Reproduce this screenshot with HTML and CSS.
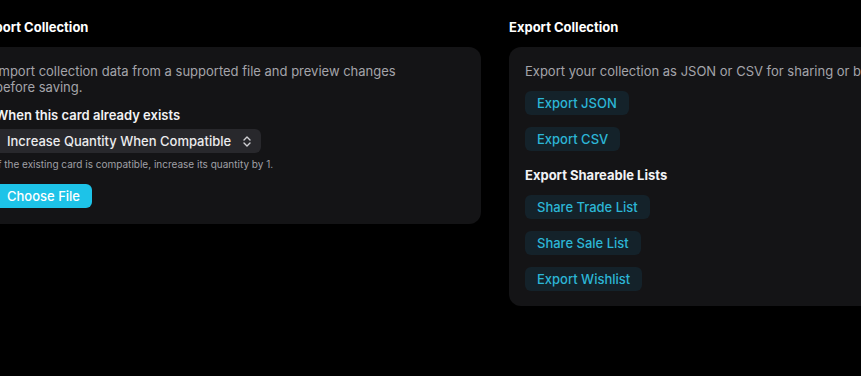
FILE: index.html
```html
<!DOCTYPE html>
<html>
<head>
<meta charset="utf-8">
<link rel="stylesheet" href="styles.css">
</head>
<body>
<div class="page">
  <section class="col">
    <h2 class="heading">Import Collection</h2>
    <div class="card">
      <p class="desc">Import collection data from a supported file and preview changes before saving.</p>
      <div class="label">When this card already exists</div>
      <div class="select">
        <span>Increase Quantity When Compatible</span>
        <svg class="chev" width="8" height="11" viewBox="0 0 8 11"><path d="M1 4 L4 1 L7 4 M1 7 L4 10 L7 7" fill="none" stroke="#d0d0d4" stroke-width="1.4" stroke-linecap="round" stroke-linejoin="round"/></svg>
      </div>
      <div class="help">If the existing card is compatible, increase its quantity by 1.</div>
      <div class="row"><button class="primary">Choose File</button></div>
    </div>
  </section>
  <section class="col">
    <h2 class="heading">Export Collection</h2>
    <div class="card">
      <p class="desc one">Export your collection as JSON or CSV for sharing or backup.</p>
      <div class="row"><button class="ghost">Export JSON</button></div>
      <div class="row"><button class="ghost">Export CSV</button></div>
      <div class="label sub">Export Shareable Lists</div>
      <div class="row"><button class="ghost">Share Trade List</button></div>
      <div class="row"><button class="ghost">Share Sale List</button></div>
      <div class="row"><button class="ghost">Export Wishlist</button></div>
    </div>
  </section>
</div>
</body>
</html>
```

FILE: styles.css
```css
html, body {
  margin: 0;
  padding: 0;
  background: #000;
  overflow: hidden;
}
body {
  font-family: Inter, "Noto Sans", sans-serif;
  color: #ececee;
  -webkit-font-smoothing: antialiased;
}
.page {
  display: grid;
  grid-template-columns: 502px 502px;
  column-gap: 28px;
  margin-left: -21px;
  padding-top: 19px;
  align-items: start;
}
.col {
  display: flex;
  flex-direction: column;
}
.heading {
  margin: 0 0 12px 0;
  font-size: 13px;
  line-height: 16px;
  font-weight: 700;
  color: #fff;
}
.card {
  background: #141416;
  border-radius: 12px;
  padding: 16px 16px 15px 16px;
  display: flex;
  flex-direction: column;
}
.desc {
  margin: 0;
  font-size: 13px;
  line-height: 16px;
  color: #a4a4aa;
  max-width: 412px;
}
.desc.one {
  max-width: none;
  white-space: nowrap;
  margin-bottom: 12px;
}
.label {
  margin-top: 12px;
  font-size: 13px;
  line-height: 16px;
  font-weight: 600;
  color: #f2f2f4;
}
.label.sub {
  margin-top: 4px;
  margin-bottom: 12px;
  font-weight: 700;
}
.select {
  margin-top: 6px;
  width: 266px;
  box-sizing: border-box;
  height: 24px;
  background: #28282c;
  border-radius: 6px;
  padding: 0 10px 0 12px;
  display: flex;
  align-items: center;
  justify-content: space-between;
  font-size: 13px;
  color: #ececee;
  font-weight: 500;
}
.help {
  margin-top: 4px;
  font-size: 10px;
  line-height: 14px;
  color: #a0a0a6;
}
.row {
  display: flex;
}
.primary {
  margin-top: 13px;
  height: 24px;
  padding: 0 12px;
  border: none;
  border-radius: 6px;
  background: #1dc3e8;
  color: #fff;
  font-family: inherit;
  font-size: 13px;
  font-weight: 500;
}
.card .row:last-child .primary {
  margin-bottom: 1px;
}
.ghost {
  height: 24px;
  padding: 0 12px;
  border: none;
  border-radius: 6px;
  background: #14222a;
  color: #2cb6d6;
  font-family: inherit;
  font-size: 13px;
  font-weight: 500;
  margin-bottom: 12px;
}
.row:last-child .ghost {
  margin-bottom: 0;
}
```
